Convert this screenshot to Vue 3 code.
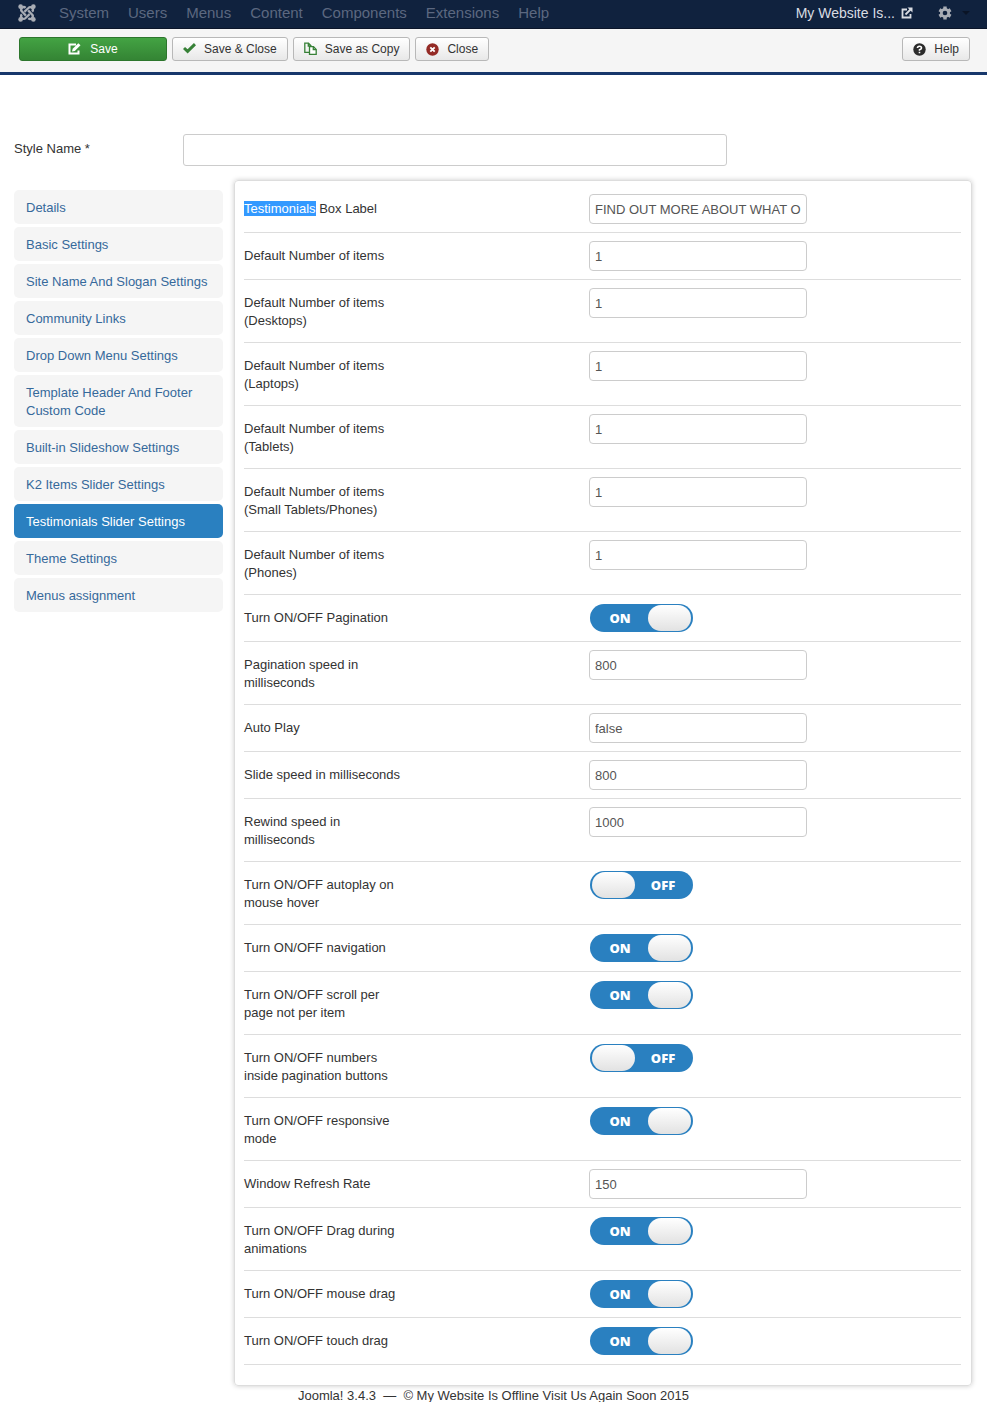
<script setup>
import { reactive, ref } from 'vue'

const menu = ['System', 'Users', 'Menus', 'Content', 'Components', 'Extensions', 'Help']

const tabs = [
  'Details',
  'Basic Settings',
  'Site Name And Slogan Settings',
  'Community Links',
  'Drop Down Menu Settings',
  'Template Header And Footer Custom Code',
  'Built-in Slideshow Settings',
  'K2 Items Slider Settings',
  'Testimonials Slider Settings',
  'Theme Settings',
  'Menus assignment',
]
const active = ref('Testimonials Slider Settings')
const styleName = ref('')

const fields = reactive([
  { mark: 'Testimonials', label: ' Box Label', value: 'FIND OUT MORE ABOUT WHAT O' },
  { label: 'Default Number of items', value: '1' },
  { label: 'Default Number of items (Desktops)', value: '1' },
  { label: 'Default Number of items (Laptops)', value: '1' },
  { label: 'Default Number of items (Tablets)', value: '1' },
  { label: 'Default Number of items (Small Tablets/Phones)', value: '1' },
  { label: 'Default Number of items (Phones)', value: '1' },
  { label: 'Turn ON/OFF Pagination', value: true },
  { label: 'Pagination speed in milliseconds', value: '800' },
  { label: 'Auto Play', value: 'false' },
  { label: 'Slide speed in milliseconds', value: '800' },
  { label: 'Rewind speed in milliseconds', value: '1000' },
  { label: 'Turn ON/OFF autoplay on mouse hover', value: false },
  { label: 'Turn ON/OFF navigation', value: true },
  { label: 'Turn ON/OFF scroll per page not per item', value: true },
  { label: 'Turn ON/OFF numbers inside pagination buttons', value: false },
  { label: 'Turn ON/OFF responsive mode', value: true },
  { label: 'Window Refresh Rate', value: '150' },
  { label: 'Turn ON/OFF Drag during animations', value: true },
  { label: 'Turn ON/OFF mouse drag', value: true },
  { label: 'Turn ON/OFF touch drag', value: true },
])
</script>

<template>
  <div class="page">
    <header class="navbar">
      <a href="#" class="brand" aria-label="Control Panel">
        <svg width="18" height="18" viewBox="0 0 24 24">
          <g v-for="n in 4" :key="n" :transform="`rotate(${n * 90} 12 12)`">
            <path d="M5.200 13.800A3.400 3.400 0 0 0 10.100 18.600L15.500 13.500" fill="none" stroke="#a9adb5" stroke-width="3" />
            <circle cx="3.500" cy="20.500" r="3.100" fill="#a9adb5" />
          </g>
        </svg>
      </a>
      <nav class="menu">
        <a v-for="m in menu" :key="m" href="#">{{ m }}</a>
      </nav>
      <a href="#" class="site">
        My Website Is...
        <svg width="12" height="12" viewBox="0 0 12 12" fill="none" stroke="#d9dce2" stroke-width="1.800">
          <path d="M6 2.500H1.500v8h8V7" /><path d="M4.500 7.500 10 2" />
          <path d="M6.500 0.500H11.500V5.500Z" fill="#d9dce2" stroke="none" />
        </svg>
      </a>
      <button type="button" class="gear" aria-label="User menu">
        <svg width="14" height="14" viewBox="0 0 14 14">
          <g stroke="#a9adb5" stroke-width="3.400">
            <path d="M7 0.500V13.500M1.400 3.700 12.600 10.300M1.400 10.300 12.600 3.700" />
          </g>
          <circle cx="7" cy="7" r="5" fill="#a9adb5" /><circle cx="7" cy="7" r="2.300" fill="#10223e" />
        </svg>
        <span class="caret"></span>
      </button>
    </header>

    <div class="toolbar">
      <button type="button" class="btn save">
        <svg width="14" height="12" viewBox="0 0 14 12">
          <path d="M8 1.500H1.500V10.500H10.500V7.500" fill="none" stroke="#fff" stroke-width="2" />
          <path d="M4 8.500 4.700 5.800 10.300 0.200 12.500 2.200 6.800 7.900Z" fill="#fff" />
        </svg>
        Save
      </button>
      <button type="button" class="btn">
        <svg width="13" height="12" viewBox="0 0 13 12">
          <path d="M1 5 4.600 8.400 12 1.200" fill="none" stroke="#378137" stroke-width="3" />
        </svg>
        Save &amp; Close
      </button>
      <button type="button" class="btn">
        <svg width="13" height="14" viewBox="0 0 13 14" fill="none" stroke="#378137" stroke-width="1.300">
          <path d="M5 10.300H0.800V1.200H4.500L7 3.700V5" /><path d="M4.300 1.200V4H7" />
          <path d="M5.500 4.700H9.500L12.200 7.400V12.300H5.500Z" fill="#fff" /><path d="M9.300 4.700V7.600H12.200" />
        </svg>
        Save as Copy
      </button>
      <button type="button" class="btn">
        <svg width="13" height="13" viewBox="0 0 13 13">
          <circle cx="6.500" cy="6.500" r="6.200" fill="#942a25" />
          <path d="M4.300 4.300 8.700 8.700M8.700 4.300 4.300 8.700" stroke="#fff" stroke-width="1.800" />
        </svg>
        Close
      </button>
      <button type="button" class="btn help">
        <svg width="13" height="13" viewBox="0 0 13 13">
          <circle cx="6.500" cy="6.500" r="6.200" fill="#2b2b2b" />
          <path d="M4.500 5Q4.500 3.300 6.500 3.300T8.500 5Q8.500 6 6.500 6.800V7.800M6.500 8.800V10.300" fill="none" stroke="#fff" stroke-width="1.600" />
        </svg>
        Help
      </button>
    </div>

    <main>
      <div class="name-row">
        <label for="style-name">Style Name *</label>
        <input id="style-name" v-model="styleName" type="text" class="name-input">
      </div>

      <div class="columns">
        <nav class="tabs">
          <a v-for="t in tabs" :key="t" href="#" :class="{ active: t === active }" @click.prevent="active = t">{{ t }}</a>
        </nav>

        <form class="panel" @submit.prevent>
          <div v-for="(f, i) in fields" :key="i" class="row">
            <label :for="'field-' + i" class="row-label"><span v-if="f.mark" class="mark">{{ f.mark }}</span>{{ f.label }}</label>
            <div v-if="typeof f.value === 'boolean'" class="control">
              <label class="switch" :class="{ off: !f.value }">
                <input :id="'field-' + i" v-model="f.value" type="checkbox">
                <span class="state">{{ f.value ? 'ON' : 'OFF' }}</span>
                <span class="thumb"></span>
              </label>
            </div>
            <div v-else class="control">
              <input :id="'field-' + i" v-model="f.value" type="text" class="text">
            </div>
          </div>
        </form>
      </div>
    </main>

    <footer>Joomla! 3.4.3 &nbsp;—&nbsp; © My Website Is Offline Visit Us Again Soon 2015</footer>
  </div>
</template>

<style>
body {
  background: #fff;
}
</style>

<style scoped>
.page {
  font: 13px/18px "Liberation Sans", Arial, sans-serif;
  color: #333;
}
.page *,
.page {
  box-sizing: border-box;
}
a {
  text-decoration: none;
}
svg {
  display: block;
  flex: none;
}
.navbar {
  display: flex;
  align-items: center;
  height: 29px;
  padding: 0 17px 2px 18px;
  background: #10223e;
  border-bottom: 1px solid #0b1529;
  font-size: 15px;
}
.menu {
  display: flex;
  gap: 19px;
  margin-left: 23px;
}
.menu a {
  color: #5c6880;
}
.site {
  display: flex;
  align-items: center;
  gap: 6px;
  margin-left: auto;
  color: #d9dce2;
  font-size: 14px;
}
.gear {
  display: flex;
  align-items: center;
  gap: 10px;
  margin-left: 25px;
  padding: 0;
  border: 0;
  background: none;
}
.caret {
  border: 4px solid transparent;
  border-top-color: #0a1426;
  border-bottom: 0;
}
.toolbar {
  display: flex;
  gap: 5px;
  padding: 8px 17px 11px 19px;
  background: #f5f5f5;
  border-bottom: 3px solid #17376b;
}
.btn {
  display: flex;
  align-items: center;
  justify-content: center;
  gap: 8px;
  height: 24px;
  padding: 0 10px;
  border: 1px solid #b8b8b8;
  border-radius: 3px;
  background: linear-gradient(#fff, #e8e8e8);
  color: #333;
  font: 12px/18px "Liberation Sans", Arial, sans-serif;
}
.save {
  width: 148px;
  border-color: #2d762d;
  background: linear-gradient(#43a343, #348434);
  color: #fff;
}
.help {
  margin-left: auto;
}
main {
  padding: 59px 15px 0 14px;
}
.name-row {
  display: flex;
}
.name-row label {
  width: 169px;
  padding-top: 6px;
}
.name-input {
  width: 544px;
  height: 32px;
  padding: 4px 6px;
  border: 1px solid #ccc;
  border-radius: 3px;
  font: inherit;
}
.columns {
  display: flex;
  align-items: flex-start;
  gap: 11px;
  margin-top: 14px;
}
.tabs {
  display: flex;
  flex-direction: column;
  flex: none;
  gap: 3px;
  width: 209px;
  padding-top: 10px;
}
.tabs a {
  padding: 9px 12px 7px;
  border-radius: 5px;
  background: #f5f5f5;
  color: #36699b;
}
.tabs a.active {
  background: #2a80c0;
  color: #fff;
}
.panel {
  flex: 1;
  padding: 5px 10px 20px 9px;
  border: 1px solid #ddd;
  border-radius: 4px;
  box-shadow: 0 0 5px #ccc;
}
.row {
  display: grid;
  grid-template-columns: 345px 1fr;
  padding: 8px 0;
  border-bottom: 1px solid #ddd;
}
.row-label {
  width: 160px;
  padding: 6px 0 4px;
}
.mark {
  background: #3399ff;
  color: #fff;
}
.control {
  display: flex;
  align-items: center;
  height: 30px;
}
.text {
  width: 218px;
  height: 30px;
  padding: 4px 5px;
  border: 1px solid #ccc;
  border-radius: 4px;
  color: #555;
  font: inherit;
}
.switch {
  display: flex;
  width: 103px;
  height: 28px;
  margin-left: 1px;
  padding: 1px 2px;
  border-radius: 14px;
  background: #2a80c0;
  color: #fff;
  font: 800 13px/26px "Open Sans", sans-serif;
  cursor: pointer;
}
.switch.off {
  flex-direction: row-reverse;
}
.switch input {
  position: absolute;
  width: 1px;
  height: 1px;
  margin: 0;
  opacity: 0;
}
.state {
  flex: 1;
  text-align: center;
}
.thumb {
  width: 43px;
  border-radius: 13px;
  background: linear-gradient(#fff, #e2e2e2);
}
footer {
  margin-top: 4px;
  line-height: 12px;
  text-align: center;
}
</style>
